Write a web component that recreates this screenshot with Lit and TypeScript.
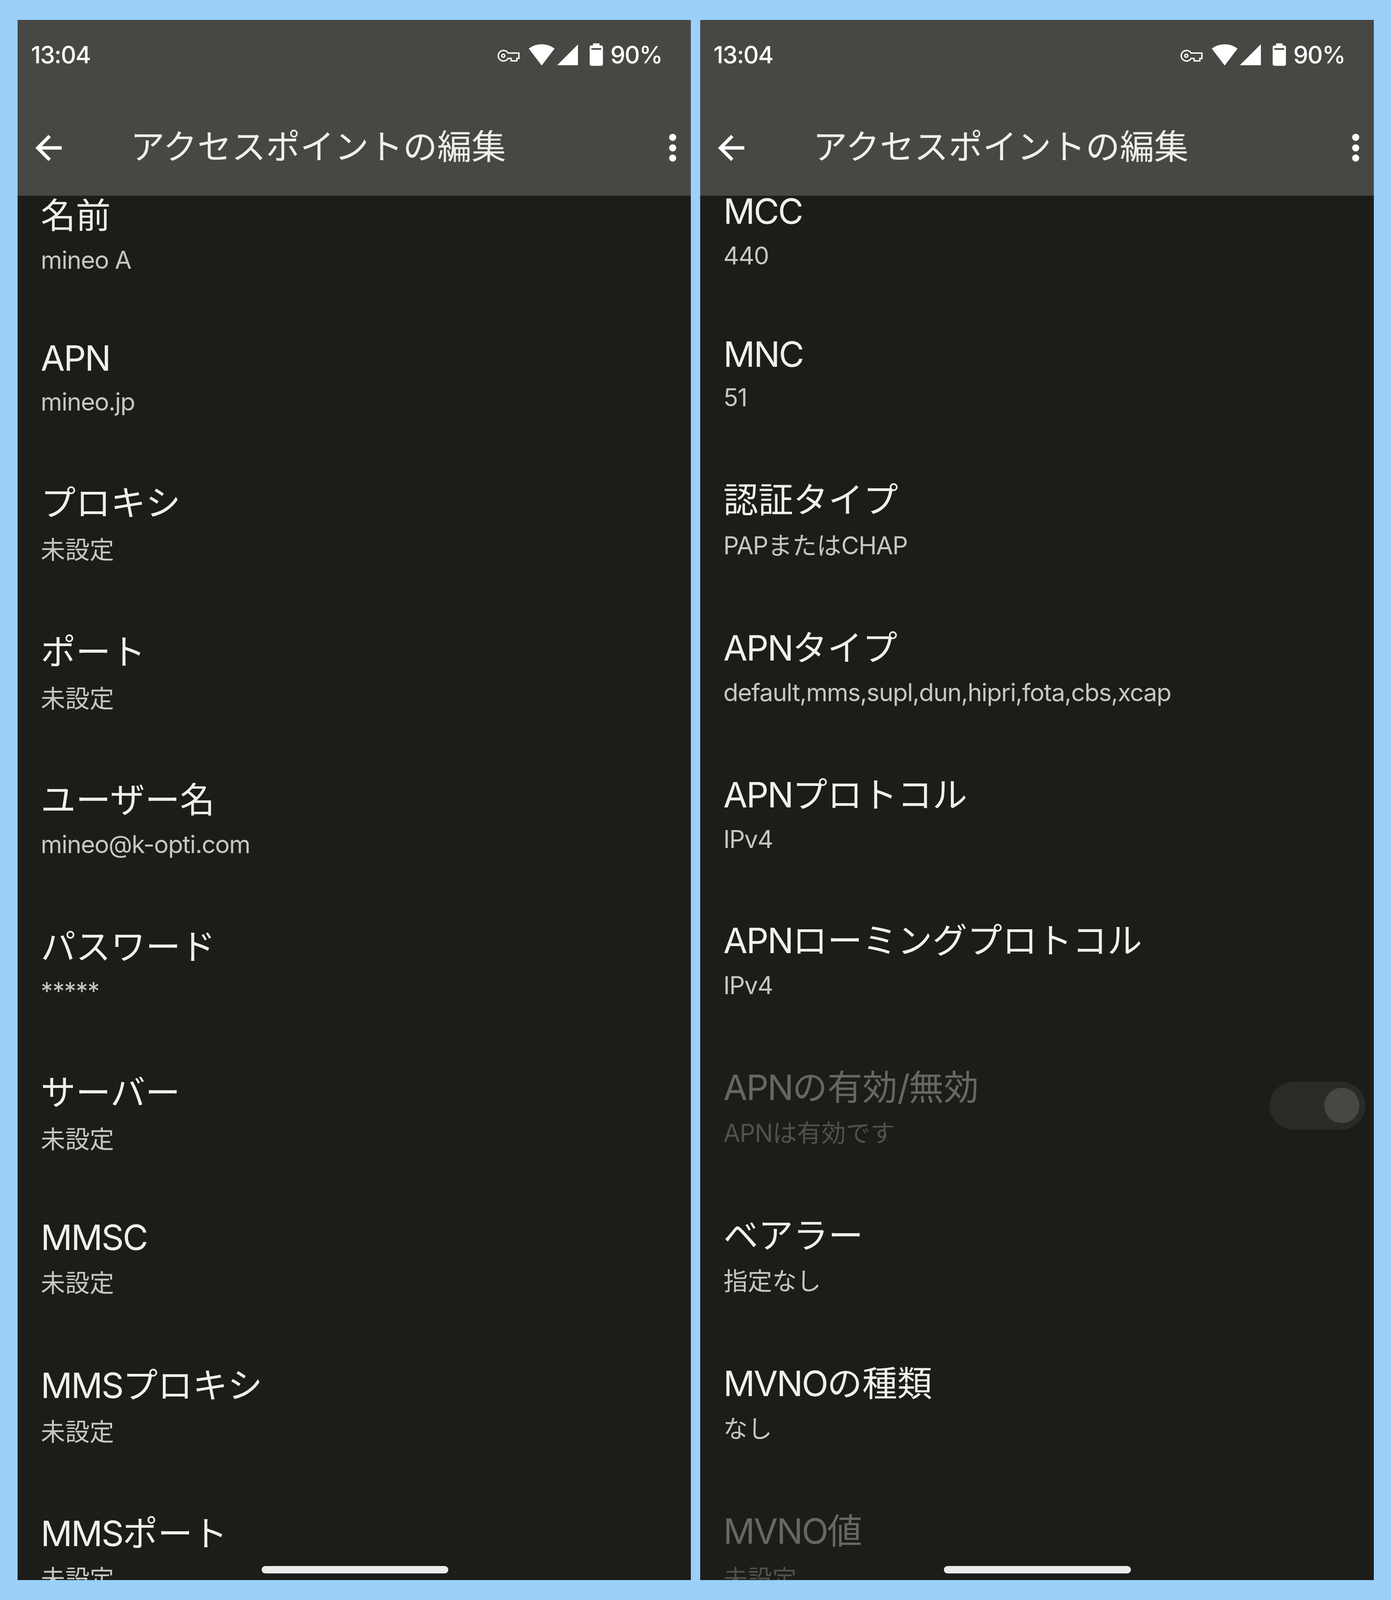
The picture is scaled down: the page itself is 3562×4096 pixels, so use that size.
import { LitElement, html, css, svg } from "lit";
import { customElement } from "lit/decorators.js";

type Row = { t: string; s: string; tc: number; sc: number; off?: boolean; sw?: boolean };

const S = 3.003;
const left: Row[] = [
  { t: "名前", s: "mineo A", tc: 210, sc: 254 },
  { t: "APN", s: "mineo.jp", tc: 350, sc: 393 },
  { t: "プロキシ", s: "未設定", tc: 492, sc: 538 },
  { t: "ポート", s: "未設定", tc: 638, sc: 684 },
  { t: "ユーザー名", s: "mineo@k-opti.com", tc: 783, sc: 827 },
  { t: "パスワード", s: "*****", tc: 927, sc: 971 },
  { t: "サーバー", s: "未設定", tc: 1070, sc: 1116 },
  { t: "MMSC", s: "未設定", tc: 1212, sc: 1257 },
  { t: "MMSプロキシ", s: "未設定", tc: 1357, sc: 1403 },
  { t: "MMSポート", s: "未設定", tc: 1502, sc: 1547 },
];
const right: Row[] = [
  { t: "MCC", s: "440", tc: 206, sc: 250 },
  { t: "MNC", s: "51", tc: 346, sc: 389 },
  { t: "認証タイプ", s: "PAPまたはCHAP", tc: 489, sc: 534 },
  { t: "APNタイプ", s: "default,mms,supl,dun,hipri,fota,cbs,xcap", tc: 634, sc: 678 },
  { t: "APNプロトコル", s: "IPv4", tc: 778, sc: 822 },
  { t: "APNローミングプロトコル", s: "IPv4", tc: 921, sc: 965 },
  { t: "APNの有効/無効", s: "APNは有効です", tc: 1065, sc: 1110, off: true, sw: true },
  { t: "ベアラー", s: "指定なし", tc: 1210, sc: 1255 },
  { t: "MVNOの種類", s: "なし", tc: 1355, sc: 1400 },
  { t: "MVNO値", s: "未設定", tc: 1500, sc: 1547, off: true },
];

const icons = {
  key: svg`<path d="M31 10H63V26H57V33H40V26H31A15.5 15.5 0 1 1 31 10Z" fill="none" stroke="#fff" stroke-width="4"/><circle cx="17" cy="18" r="4.5" fill="none" stroke="#fff" stroke-width="4"/>`,
  wifi: svg`<path d="M0 13A63 63 0 0 1 76 13L38 63Z" fill="#fff"/>`,
  signal: svg`<path d="M0 63L63 0V63Z" fill="#fff"/>`,
  battery: svg`<path fill-rule="evenodd" d="M10 0H29V6H34A5 5 0 0 1 39 11V61A5 5 0 0 1 34 66H5A5 5 0 0 1 0 61V11A5 5 0 0 1 5 6H10ZM5 14V19H34V14Z" fill="#fff"/>`,
  back: svg`<path d="M81 41H10M45 6L10 41L45 76" fill="none" stroke="#fff" stroke-width="10"/>`,
  more: svg`<circle cx="11" cy="11" r="10.5" fill="#fff"/><circle cx="11" cy="42" r="10.5" fill="#fff"/><circle cx="11" cy="72" r="10.5" fill="#fff"/>`,
};

/* Wrap the Latin runs, whose tracking differs from the kana and kanji around them. */
const runs = (text: string) =>
  text.split(/([\x00-\x7f]+)/).map((p, i) => (i % 2 ? html`<span class="lat">${p}</span>` : p));

@customElement("app-root")
export class AppRoot extends LitElement {
  static styles = css`
    :host {
      display: block;
      zoom: 0.8696;
      width: 4096px;
      height: 4710px;
      background: #9ad0f9;
      font-family: Inter, "Noto Sans CJK JP", sans-serif;
    }
    .page {
      box-sizing: border-box;
      width: 4096px;
      height: 4710px;
      padding: 59px 51px 59px 52px;
      display: grid;
      grid-template-columns: 1982px 1983px;
      column-gap: 28px;
    }
    .phone {
      position: relative;
      display: flex;
      flex-direction: column;
      background: #1c1d19;
      overflow: hidden;
    }
    .header {
      flex: none;
      height: 517px;
      background: #474843;
      display: flex;
      flex-direction: column;
    }
    .status {
      height: 204px;
      display: flex;
      align-items: center;
      justify-content: space-between;
      box-sizing: border-box;
      padding: 0 84px 0 39px;
      color: #fff;
      font-size: 70px;
      font-weight: 500;
      letter-spacing: -2px;
    }
    .tray { display: flex; align-items: center; }
    .tray svg { display: block; }
    .k { margin: 6px 27px 0 0; }
    .w { margin-right: 6px; }
    .g { margin-right: 34px; }
    .b { margin-right: 22px; }
    .toolbar {
      flex: 1;
      display: flex;
      align-items: center;
      box-sizing: border-box;
      padding: 30px 42px 0 49px;
    }
    .title {
      flex: 1;
      margin: -6px 0 0 202px;
      font-size: 101px;
      color: #efeee7;
      line-height: 120px;
    }
    .list {
      flex: 1;
      overflow: hidden;
      display: flex;
      flex-direction: column;
      min-height: 0;
    }
    .row {
      flex: none;
      display: flex;
      justify-content: space-between;
      align-items: flex-start;
      padding: 0 25px 0 68px;
    }
    .t {
      font-size: 103px;
      line-height: 120px;
      height: 120px;
      color: #f0efe8;
      white-space: nowrap;
    }
    .t .lat { letter-spacing: -3.6px; }
    .s {
      font-size: 72px;
      line-height: 90px;
      height: 90px;
      color: #c6c7be;
      white-space: nowrap;
    }
    .s .lat { letter-spacing: -1.7px; }
    .off .t { color: #666761; }
    .off .s { color: #50514c; }
    .sw {
      width: 282px;
      height: 142px;
      border-radius: 71px;
      background: #2a2b27;
      display: flex;
      align-items: center;
      justify-content: flex-end;
      padding-right: 17px;
      box-sizing: border-box;
    }
    .thumb {
      width: 103px;
      height: 103px;
      border-radius: 50%;
      background: #474843;
    }
    .pill {
      position: absolute;
      left: 718px;
      bottom: 19px;
      width: 550px;
      height: 22px;
      border-radius: 11px;
      background: #ececec;
    }
  `;

  private phone(rows: Row[]) {
    const top = 576;
    const firstCenter = rows[0].tc * S;
    return html`<div class="phone">
      <div class="header">
        <div class="status">
          <span>13:04</span>
          <div class="tray">
            <svg class="k" width="65" height="36" viewBox="0 0 65 36">${icons.key}</svg>
            <svg class="w" width="76" height="63" viewBox="0 0 76 63">${icons.wifi}</svg>
            <svg class="g" width="63" height="63" viewBox="0 0 63 63">${icons.signal}</svg>
            <svg class="b" width="39" height="66" viewBox="0 0 39 66">${icons.battery}</svg>
            <span>90%</span>
          </div>
        </div>
        <div class="toolbar">
          <svg width="81" height="81" viewBox="0 0 81 81">${icons.back}</svg>
          <div class="title">アクセスポイントの編集</div>
          <svg width="22" height="83" viewBox="0 0 22 83">${icons.more}</svg>
        </div>
      </div>
      <div class="list">
        ${rows.map((r, i) => {
          const next = rows[i + 1] ? rows[i + 1].tc : r.tc + 145;
          const h = (next - r.tc) * S;
          const mt = i === 0 ? firstCenter - 60 - top + 4 : 0;
          const subGap = (r.sc - r.tc) * S - 60 - 45 - 2;
          const swTop = 60 + ((r.sc + r.tc) / 2 - r.tc) * S - 71 - 15;
          return html`<div
            class="row ${r.off ? "off" : ""}"
            style="height:${h}px;margin-top:${mt}px"
          >
            <div>
              <div class="t">${runs(r.t)}</div>
              <div class="s" style="margin-top:${subGap}px">${runs(r.s)}</div>
            </div>
            ${r.sw
              ? html`<div class="sw" style="margin-top:${swTop}px"><div class="thumb"></div></div>`
              : ""}
          </div>`;
        })}
      </div>
      <div class="pill"></div>
    </div>`;
  }

  render() {
    return html`<div class="page">${this.phone(left)}${this.phone(right)}</div>`;
  }
}
